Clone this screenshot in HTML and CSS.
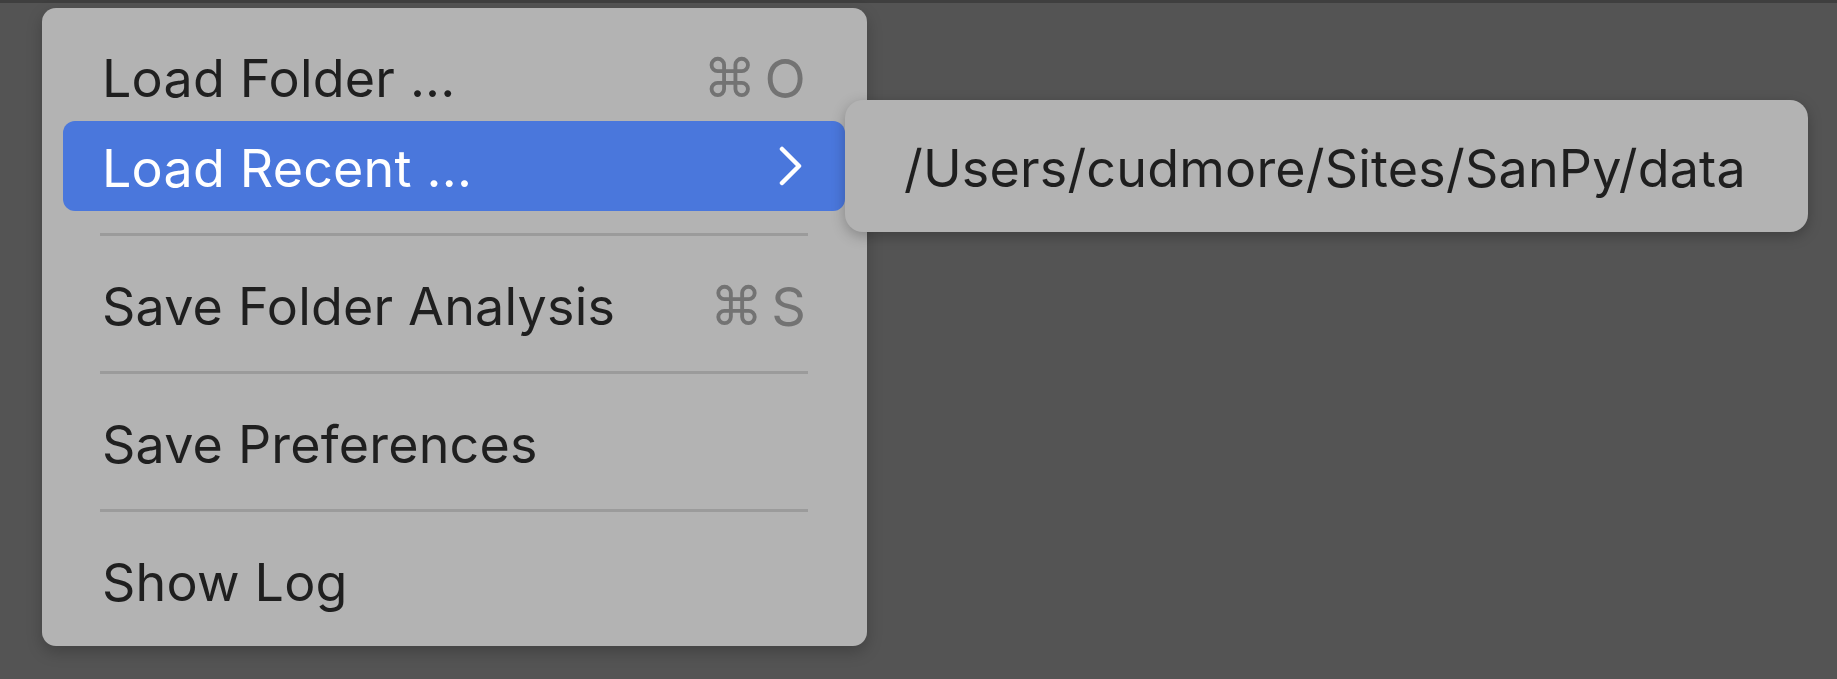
FILE: index.html
```html
<!DOCTYPE html>
<html>
<head>
<meta charset="utf-8">
<link rel="stylesheet" href="styles.css">
</head>
<body>
<div class="topbar"></div>
<div class="stage">
  <div class="menu">
    <div class="item">
      <span class="label">Load Folder ...</span>
      <span class="shortcut"><span class="cmd">⌘</span><span class="key">O</span></span>
    </div>
    <div class="item active">
      <span class="label">Load Recent ...</span>
      <svg class="chevron" width="26" height="40" viewBox="0 0 26 40"><path d="M4 3 L21 20 L4 37" fill="none" stroke="#ffffff" stroke-width="4.5" stroke-linecap="round" stroke-linejoin="round"/></svg>
      <div class="submenu">
        <span class="label">/Users/cudmore/Sites/SanPy/data</span>
      </div>
    </div>
    <div class="sep"></div>
    <div class="item">
      <span class="label">Save Folder Analysis</span>
      <span class="shortcut"><span class="cmd">⌘</span><span class="key">S</span></span>
    </div>
    <div class="sep"></div>
    <div class="item">
      <span class="label">Save Preferences</span>
    </div>
    <div class="sep"></div>
    <div class="item">
      <span class="label">Show Log</span>
    </div>
  </div>
</div>
</body>
</html>
```

FILE: styles.css
```css
html, body {
  margin: 0;
  padding: 0;
}
body {
  background: #545454;
  width: 1837px;
  height: 679px;
  overflow: hidden;
  font-family: "Inter", "Liberation Sans", "DejaVu Sans", sans-serif;
}
.topbar {
  height: 3px;
  background: #3f3f3f;
}
.stage {
  padding: 5px 0 0 42px;
}
.menu {
  width: 825px;
  box-sizing: border-box;
  padding: 23px 22px 21px 21px;
  background: #b3b3b3;
  border-radius: 14px;
  box-shadow: 0 6px 16px rgba(0, 0, 0, 0.22);
  display: flex;
  flex-direction: column;
}
.item {
  position: relative;
  height: 90px;
  display: flex;
  align-items: center;
  justify-content: space-between;
  padding: 0 39px 0 39px;
  border-radius: 12px;
  color: #1f1f1f;
  font-size: 52px;
  letter-spacing: 0.2px;
}
.item .label {
  white-space: nowrap;
  padding-top: 4px;
}
.item.active {
  background: #4a77dc;
  color: #ffffff;
}
.shortcut {
  display: flex;
  align-items: center;
  gap: 8px;
  padding-top: 4px;
  color: #737373;
}
.cmd {
  font-family: "DejaVu Sans", sans-serif;
  font-size: 53px;
  line-height: 1;
}
.key {
  font-size: 54px;
}
.chevron {
  margin-right: 2px;
}
.sep {
  height: 3px;
  margin: 22px 37px 23px;
  background: #9b9b9b;
}
.submenu {
  position: absolute;
  top: -21px;
  left: 100%;
  width: 963px;
  height: 132px;
  box-sizing: border-box;
  padding: 0 0 0 59px;
  display: flex;
  align-items: center;
  background: #b3b3b3;
  border-radius: 18px;
  box-shadow: 0 4px 14px rgba(0, 0, 0, 0.25);
  color: #1f1f1f;
}
```
